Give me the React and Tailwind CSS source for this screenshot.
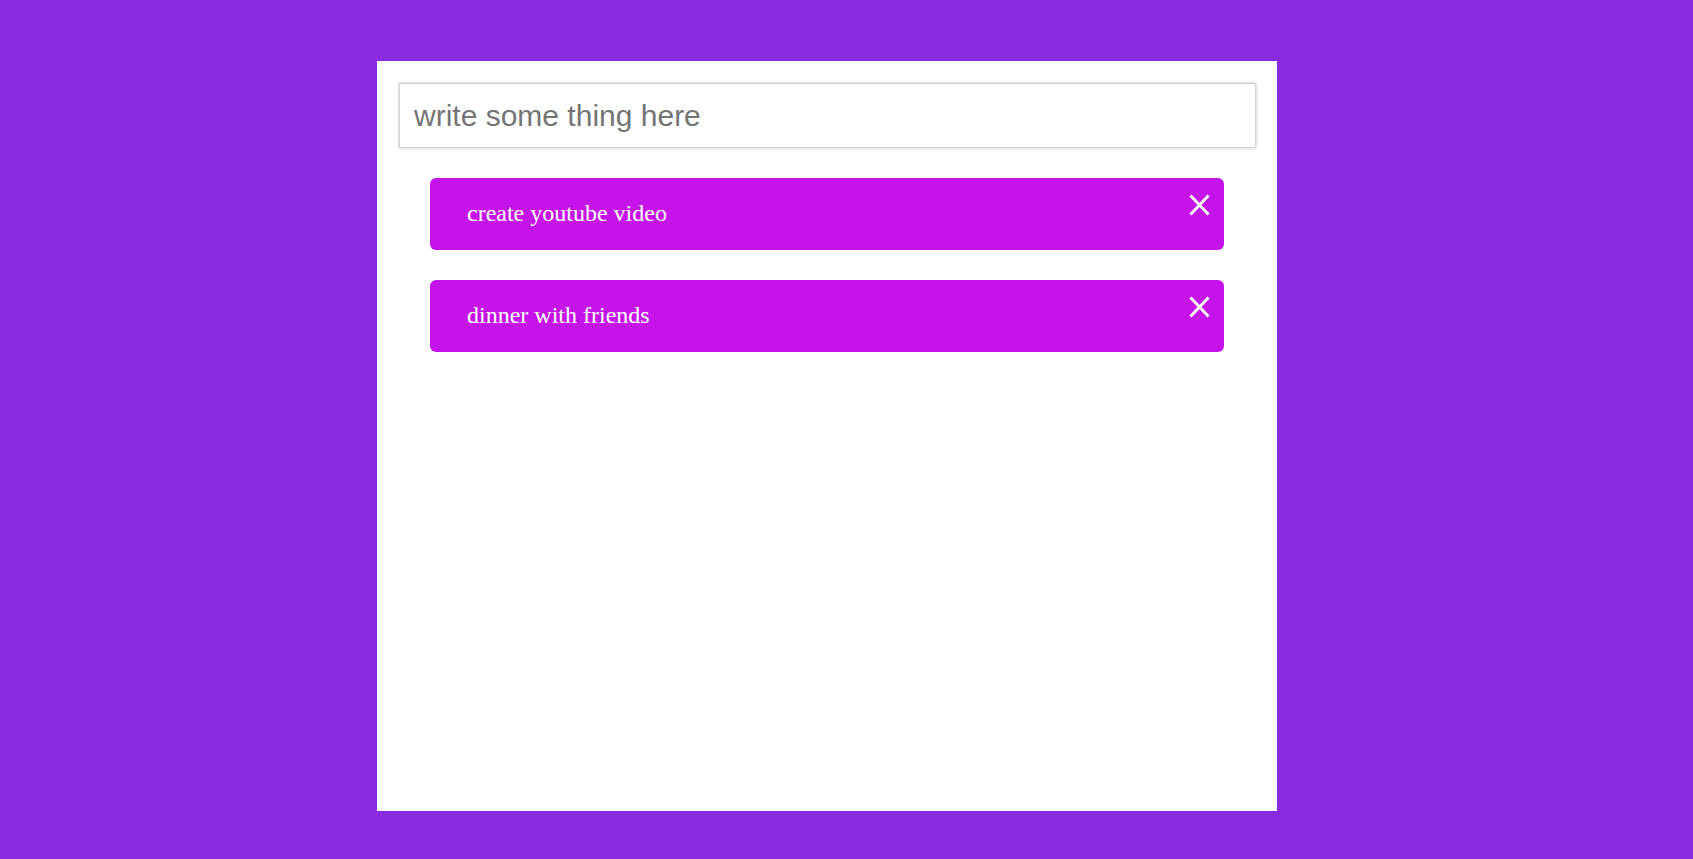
const todos = ['create youtube video', 'dinner with friends']

export default function App() {
  return (
    <div className="min-h-[859px] bg-[#8a2be2] pt-[61px] pl-[377px] pb-[48px]">
      <div className="w-[900px] h-[750px] bg-white pt-[22px] px-[22px]">
        <input
          type="text"
          placeholder="write some thing here"
          className="block w-[857px] h-[65px] border border-[#d4d4d4] shadow-[0_0_3px_rgba(0,0,0,0.25)] px-[14px] text-[30px] text-[#333] placeholder:text-[#757575] outline-none font-['Liberation_Sans',Arial,sans-serif]"
        />
        <ul className="mt-[30px] px-[31px] flex flex-col gap-[30px]">
          {todos.map((t) => (
            <li
              key={t}
              className="relative h-[72px] rounded-[6px] bg-[#c414ea] flex items-center pl-[37px] text-[24px] text-white font-['Liberation_Serif','Times_New_Roman',serif]"
            >
              <span className="mb-[2px]">{t}</span>
              <svg
                className="absolute top-[16px] right-[14px] cursor-pointer"
                width="21"
                height="22"
                viewBox="0 0 21 22"
                fill="none"
                stroke="white"
                strokeWidth="2.8"
              >
                <path d="M1.5 1.5 L19.5 20.5 M19.5 1.5 L1.5 20.5" />
              </svg>
            </li>
          ))}
        </ul>
      </div>
    </div>
  )
}
